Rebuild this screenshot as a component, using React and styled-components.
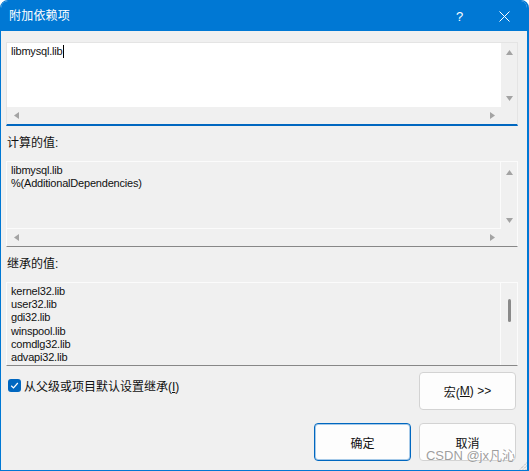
import styled, { createGlobalStyle } from "styled-components";

const GlobalStyle = createGlobalStyle`
	html, body {
		margin: 0;
		padding: 0;
		background: #fff;
	}
	body {
		font-family: "Liberation Sans", "Noto Sans CJK SC", sans-serif;
		color: #1a1a1a;
	}
`;

const inherited = [
	"kernel32.lib",
	"user32.lib",
	"gdi32.lib",
	"winspool.lib",
	"comdlg32.lib",
	"advapi32.lib",
];

const Arrow = ({ dir }) => {
	const pts = {
		up: "0,5 3.5,0 7,5",
		down: "0,0 3.5,5 7,0",
		left: "5,0 0,3.5 5,7",
		right: "0,0 5,3.5 0,7",
	}[dir];
	const vertical = dir === "up" || dir === "down";
	return (
		<svg
			width={vertical ? 7 : 5}
			height={vertical ? 5 : 7}
			viewBox={vertical ? "0 0 7 5" : "0 0 5 7"}
		>
			<polygon points={pts} fill="#a3a3a3" />
		</svg>
	);
};

const App = () => {
	return (
		<>
			<GlobalStyle />
			<Window>
				<TitleBar>
					<Title>附加依赖项</Title>
					<Controls>
						<CaptionButton>
							<span>?</span>
						</CaptionButton>
						<CaptionButton>
							<svg width="11" height="11" viewBox="0 0 11 11">
								<path
									d="M0.5 0.5 L10.5 10.5 M10.5 0.5 L0.5 10.5"
									stroke="#fff"
									strokeWidth="1"
								/>
							</svg>
						</CaptionButton>
					</Controls>
				</TitleBar>

				<Content>
					<Field $h={84} $edit $hscroll>
						<FieldText $edit>
							libmysql.lib
							<Caret />
						</FieldText>
						<VScroll $arrows>
							<Arrow dir="up" />
							<Arrow dir="down" />
						</VScroll>
						<HScroll>
							<Arrow dir="left" />
							<Arrow dir="right" />
						</HScroll>
					</Field>

					<Label>计算的值:</Label>
					<Field $h={86} $hscroll>
						<FieldText $hscroll>
							<div>libmysql.lib</div>
							<div>%(AdditionalDependencies)</div>
						</FieldText>
						<VScroll $arrows $hscroll>
							<Arrow dir="up" />
							<Arrow dir="down" />
						</VScroll>
						<HScroll>
							<Arrow dir="left" />
							<Arrow dir="right" />
						</HScroll>
					</Field>

					<Label>继承的值:</Label>
					<Field $h={84}>
						<FieldText>
							{inherited.map((lib) => (
								<div key={lib}>{lib}</div>
							))}
						</FieldText>
						<VScroll>
							<Thumb />
						</VScroll>
					</Field>

					<Footer>
						<CheckRow>
							<Check>
								<svg width="9" height="9" viewBox="0 0 9 9">
									<path
										d="M1.2 4.8 L3.5 7 L7.8 2"
										stroke="#fff"
										strokeWidth="1.2"
										fill="none"
									/>
								</svg>
							</Check>
							<span>
								从父级或项目默认设置继承(<u>I</u>)
							</span>
						</CheckRow>
						<Button $col={3}>
							宏(<u>M</u>) &gt;&gt;
						</Button>
						<Button $col={2} $primary>
							确定
						</Button>
						<Button $col={3}>取消</Button>
					</Footer>
				</Content>

				<Watermark>CSDN @jx凡沁</Watermark>
				<Grip>
					<svg width="8" height="8" viewBox="0 0 8 8">
						<path
							d="M7.5 1 L1 7.5 M7.5 4 L4 7.5 M7.5 7 L7 7.5"
							stroke="#9a9a9a"
							strokeWidth="1"
							strokeDasharray="1 1"
						/>
					</svg>
				</Grip>
			</Window>
		</>
	);
};

const Window = styled.div`
	position: relative;
	box-sizing: border-box;
	width: 529px;
	height: 471px;
	display: flex;
	flex-direction: column;
	background: #f0f0f0;
	border: 1px solid #0078d4;
	border-right-width: 2px;
	border-radius: 8px 8px 0 0;
	overflow: hidden;
`;

const TitleBar = styled.div`
	height: 30px;
	flex: none;
	display: flex;
	align-items: center;
	background: #0078d4;
	color: #fff;
	padding-left: 8px;
`;

const Title = styled.span`
	font-size: 12px;
	line-height: 30px;
	letter-spacing: 0.2px;
`;

const Controls = styled.div`
	margin-left: auto;
	display: flex;
	height: 100%;
`;

const CaptionButton = styled.div`
	width: 45px;
	height: 100%;
	display: flex;
	align-items: center;
	justify-content: center;
	font-family: "Liberation Sans", sans-serif;
	font-size: 13px;

	span {
		margin-top: 1px;
	}
`;

const Content = styled.div`
	flex: 1;
	display: flex;
	flex-direction: column;
	padding: 11px 9px 0 5px;
`;

const Field = styled.div`
	box-sizing: border-box;
	height: ${(p) => p.$h}px;
	display: grid;
	grid-template-columns: 1fr 16px;
	grid-template-rows: ${(p) => (p.$hscroll ? "1fr 17px" : "1fr")};
	background: #f0f0f0;
	border: 1px solid ${(p) => (p.$edit ? "#e4e4e4" : "#fbfbfb")};
	border-bottom: ${(p) =>
		p.$edit ? "2px solid #0067c0" : "1px solid #878787"};
	overflow: hidden;
`;

const FieldText = styled.div`
	background: ${(p) => (p.$edit ? "#fff" : "#f0f0f0")};
	border-right: 1px solid ${(p) => (p.$edit ? "#fff" : "#fbfbfb")};
	border-bottom: ${(p) => (p.$hscroll ? "1px solid #fbfbfb" : "none")};
	padding: 2px 4px;
	font-size: 11px;
	line-height: 13.2px;
	letter-spacing: -0.2px;
	color: #111;
	white-space: nowrap;
	overflow: hidden;
`;

const Caret = styled.span`
	display: inline-block;
	width: 1px;
	height: 13px;
	background: #000;
	vertical-align: -3px;
	margin-left: 1px;
`;

const VScroll = styled.div`
	display: flex;
	flex-direction: column;
	align-items: center;
	justify-content: ${(p) => (p.$arrows ? "space-between" : "flex-start")};
	padding: ${(p) => (p.$arrows ? "7px 0 6px" : "16px 0 0")};
	padding-top: ${(p) => (p.$hscroll ? "8px" : undefined)};
	padding-bottom: ${(p) => (p.$hscroll ? "6px" : undefined)};
`;

const Thumb = styled.div`
	width: 3px;
	height: 23px;
	border-radius: 2px;
	background: #8a8a8a;
`;

const HScroll = styled.div`
	display: flex;
	align-items: center;
	justify-content: space-between;
	padding: 0 6px 0 7px;
`;

const Label = styled.div`
	height: 18px;
	line-height: 18px;
	font-size: 12px;
	margin: 8px 0 9px 1px;
	color: #111;
`;

const Footer = styled.div`
	display: grid;
	grid-template-columns: 1fr 97px 97px;
	column-gap: 8px;
	row-gap: 13px;
	margin-top: 6px;
	padding-right: 2px;
`;

const CheckRow = styled.label`
	grid-column: 1 / 3;
	grid-row: 1;
	align-self: start;
	display: flex;
	align-items: center;
	gap: 3px;
	height: 14px;
	margin: 6px 0 0 2px;
	font-size: 12px;
	color: #111;
`;

const Check = styled.span`
	width: 13px;
	height: 13px;
	border-radius: 3px;
	background: #0067c0;
	display: flex;
	align-items: center;
	justify-content: center;
`;

const Button = styled.div`
	grid-column: ${(p) => p.$col};
	box-sizing: border-box;
	height: 38px;
	display: flex;
	align-items: center;
	justify-content: center;
	background: #fdfdfd;
	border: 1px solid ${(p) => (p.$primary ? "#0067c0" : "#d3d3d3")};
	box-shadow: ${(p) =>
		p.$primary ? "inset 0 0 0 1px rgba(0, 103, 192, 0.35)" : "none"};
	border-radius: 4px;
	font-size: 12px;
	color: #111;
`;

const Watermark = styled.div`
	position: absolute;
	right: 12px;
	bottom: 7px;
	font-size: 13px;
	line-height: 15px;
	color: rgba(140, 140, 140, 0.85);
	text-shadow: 0 0 1px #fff;
`;

const Grip = styled.div`
	position: absolute;
	right: 0;
	bottom: 0;
	width: 8px;
	height: 8px;
	display: flex;
`;

export default App;
